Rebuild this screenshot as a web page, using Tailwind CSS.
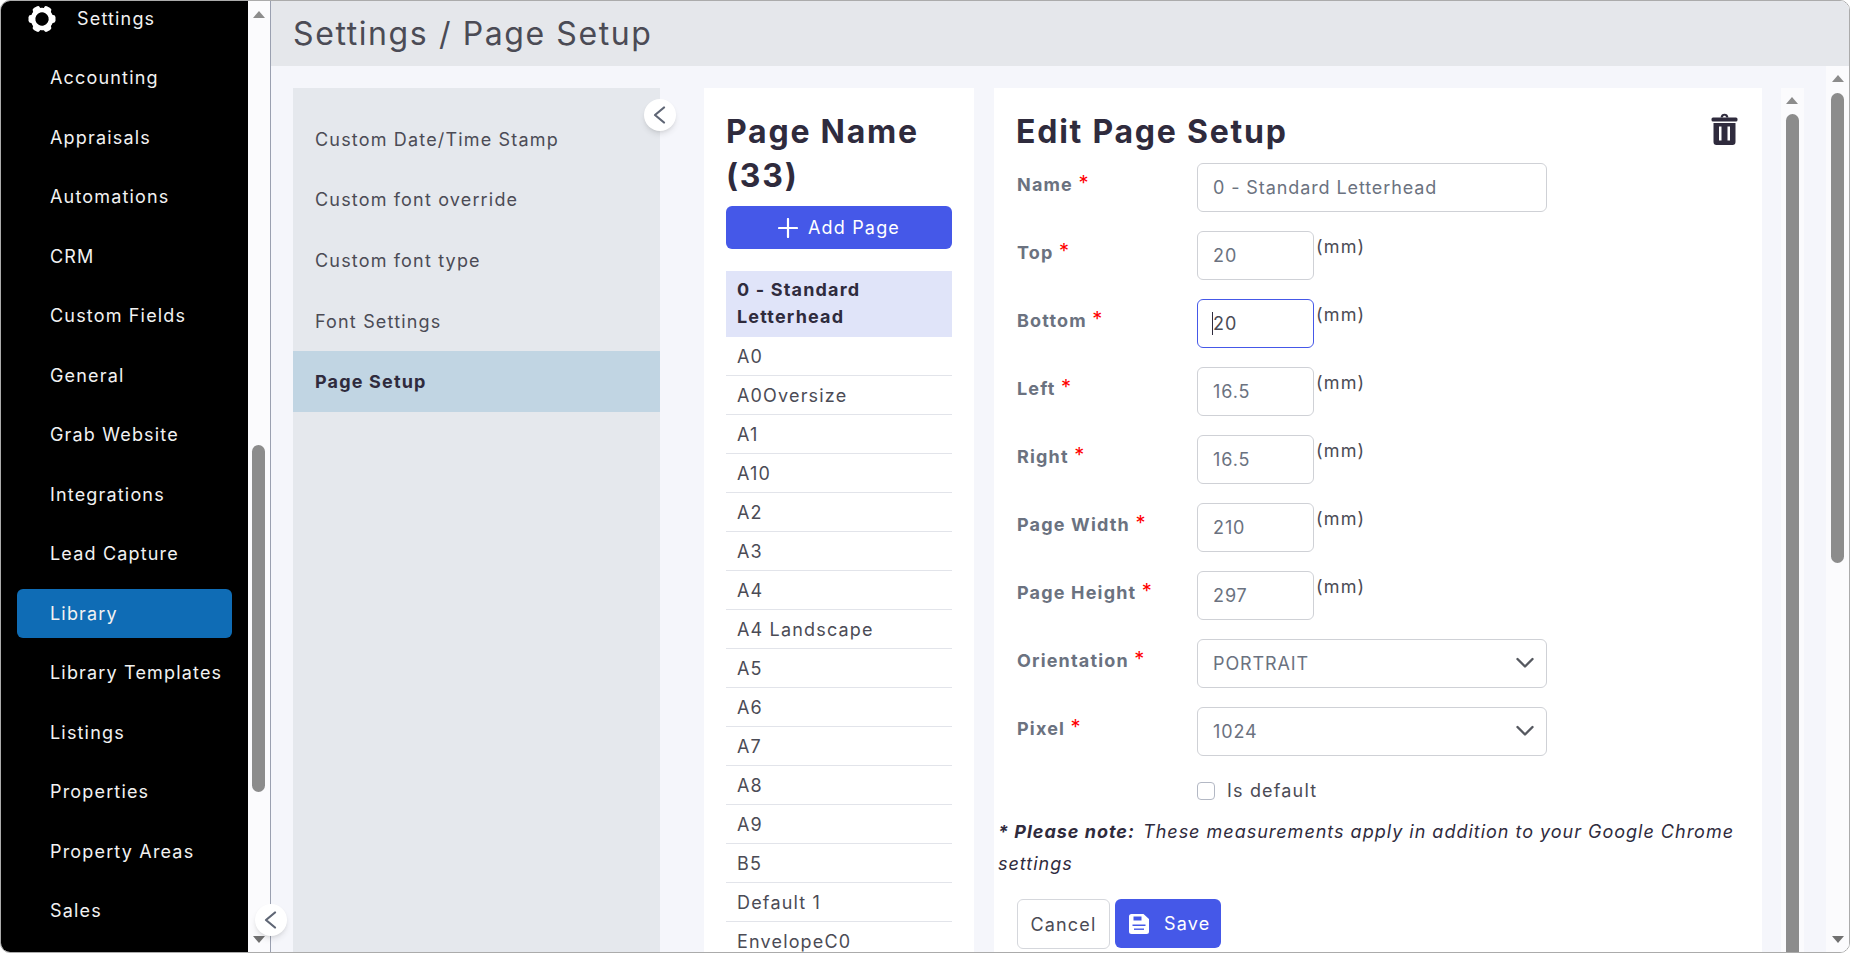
<!DOCTYPE html>
<html lang="en">
<head>
  <meta charset="UTF-8"/>
  <title>Settings / Page Setup</title>
  <script src="https://cdn.jsdelivr.net/npm/@tailwindcss/browser@4"></script>
</head>
<body class="bg-white font-['Inter',sans-serif] tracking-[0.065em] text-[18px]">
<div class="relative flex h-[953px] w-[1850px] overflow-hidden rounded-[10px] border border-[#ababab]">

  <!-- Sidebar -->
  <aside class="flex w-[247px] shrink-0 flex-col bg-black text-[#f2f2f2]">
    <div class="flex h-[35px] shrink-0 items-center pl-[27px]">
      <svg class="h-[28px] w-[28px]" viewBox="0 0 28 28" fill="#fff">
        <g transform="rotate(30 14 14)">
          <circle cx="14" cy="14" r="9" fill="none" stroke="#fff" stroke-width="4.6"/>
          <rect x="10" y="0.500" width="8" height="6" rx="2.4"/>
          <rect x="10" y="21.500" width="8" height="6" rx="2.4"/>
          <rect x="10" y="0.500" width="8" height="6" rx="2.4" transform="rotate(60 14 14)"/>
          <rect x="10" y="0.500" width="8" height="6" rx="2.4" transform="rotate(120 14 14)"/>
          <rect x="10" y="0.500" width="8" height="6" rx="2.4" transform="rotate(240 14 14)"/>
          <rect x="10" y="0.500" width="8" height="6" rx="2.4" transform="rotate(300 14 14)"/>
        </g>
      </svg>
      <span class="ml-[21px]">Settings</span>
    </div>
    <nav class="flex flex-col gap-[10.5px] pt-[17px] pl-[16px] pr-[16px]">
      <a class="flex h-[49px] items-center rounded-md pl-[33px]">Accounting</a>
      <a class="flex h-[49px] items-center rounded-md pl-[33px]">Appraisals</a>
      <a class="flex h-[49px] items-center rounded-md pl-[33px]">Automations</a>
      <a class="flex h-[49px] items-center rounded-md pl-[33px]">CRM</a>
      <a class="flex h-[49px] items-center rounded-md pl-[33px]">Custom Fields</a>
      <a class="flex h-[49px] items-center rounded-md pl-[33px]">General</a>
      <a class="flex h-[49px] items-center rounded-md pl-[33px]">Grab Website</a>
      <a class="flex h-[49px] items-center rounded-md pl-[33px]">Integrations</a>
      <a class="flex h-[49px] items-center rounded-md pl-[33px]">Lead Capture</a>
      <a class="flex h-[49px] items-center rounded-md bg-[#0f6cb5] pl-[33px]">Library</a>
      <a class="flex h-[49px] items-center rounded-md pl-[33px]">Library Templates</a>
      <a class="flex h-[49px] items-center rounded-md pl-[33px]">Listings</a>
      <a class="flex h-[49px] items-center rounded-md pl-[33px]">Properties</a>
      <a class="flex h-[49px] items-center rounded-md pl-[33px]">Property Areas</a>
      <a class="flex h-[49px] items-center rounded-md pl-[33px]">Sales</a>
    </nav>
  </aside>

  <!-- Sidebar scrollbar -->
  <div class="relative w-[23px] shrink-0 border-r border-[#9aa0b0] bg-[#fbfbfd]">
    <div class="absolute top-[10px] left-[5px] h-0 w-0 border-x-[6px] border-b-[7px] border-x-transparent border-b-[#8c8c8c]"></div>
    <div class="absolute top-[444px] left-[4px] h-[347px] w-[13px] rounded-full bg-[#8c8c8c]"></div>
    <div class="absolute bottom-[9px] left-[5px] h-0 w-0 border-x-[6px] border-t-[7px] border-x-transparent border-t-[#707070]"></div>
  </div>

  <!-- Main -->
  <main class="flex min-w-0 flex-1 flex-col bg-[#f5f6fb] text-[#2f2b3d]">
    <header class="flex h-[65px] shrink-0 items-center bg-[#e5e7eb] pl-[22px] text-[32px] text-[#4b4b55] tracking-[0.05em]">
      Settings / Page Setup
    </header>

    <div class="relative flex min-h-0 flex-1 pt-[22px] pl-[22px]">
      <!-- Settings categories -->
      <section class="relative w-[367px] shrink-0 bg-[#e5e8ed] pt-[21px] text-[#4b4b55]">
        <div class="flex h-[60.6px] items-center pl-[22px]">Custom Date/Time Stamp</div>
        <div class="flex h-[60.6px] items-center pl-[22px]">Custom font override</div>
        <div class="flex h-[60.6px] items-center pl-[22px]">Custom font type</div>
        <div class="flex h-[60.6px] items-center pl-[22px]">Font Settings</div>
        <div class="flex h-[60.6px] items-center bg-[#c1d5e3] pl-[22px] font-bold text-[#2f2b3d]">Page Setup</div>
        <button class="absolute top-[11px] -right-[16px] flex h-[32px] w-[32px] items-center justify-center rounded-full bg-white shadow-md">
          <svg class="h-[18px] w-[18px]" viewBox="0 0 18 18" fill="none" stroke="#5f6675" stroke-width="2.2" stroke-linecap="round" stroke-linejoin="round"><path d="M13 1.500 4 9l9 7.500"/></svg>
        </button>
      </section>

      <!-- Page list -->
      <section class="ml-[44px] w-[270px] shrink-0 bg-white px-[22px] pt-[22px]">
        <h2 class="text-[32px] leading-[44px] font-bold tracking-[0.055em]">Page Name (33)</h2>
        <button class="mt-[8px] flex h-[43px] w-full items-center justify-center gap-[10px] rounded-md bg-[#4558e8] text-[#fff]">
          <svg class="h-[20px] w-[20px]" viewBox="0 0 20 20" stroke="#fff" stroke-width="2.2" stroke-linecap="round"><path d="M10 1v18M1 10h18"/></svg>
          Add Page
        </button>
        <ul class="mt-[22px]">
          <li class="bg-[#e0e4f9] px-[11px] pt-[4.5px] pb-[7.5px] leading-[27px] font-bold">0 - Standard Letterhead</li>
          <li class="flex h-[39px] items-center border-b border-[#e2e4ea] pl-[11px] text-[#4b4b55]">A0</li>
          <li class="flex h-[39px] items-center border-b border-[#e2e4ea] pl-[11px] text-[#4b4b55]">A0Oversize</li>
          <li class="flex h-[39px] items-center border-b border-[#e2e4ea] pl-[11px] text-[#4b4b55]">A1</li>
          <li class="flex h-[39px] items-center border-b border-[#e2e4ea] pl-[11px] text-[#4b4b55]">A10</li>
          <li class="flex h-[39px] items-center border-b border-[#e2e4ea] pl-[11px] text-[#4b4b55]">A2</li>
          <li class="flex h-[39px] items-center border-b border-[#e2e4ea] pl-[11px] text-[#4b4b55]">A3</li>
          <li class="flex h-[39px] items-center border-b border-[#e2e4ea] pl-[11px] text-[#4b4b55]">A4</li>
          <li class="flex h-[39px] items-center border-b border-[#e2e4ea] pl-[11px] text-[#4b4b55]">A4 Landscape</li>
          <li class="flex h-[39px] items-center border-b border-[#e2e4ea] pl-[11px] text-[#4b4b55]">A5</li>
          <li class="flex h-[39px] items-center border-b border-[#e2e4ea] pl-[11px] text-[#4b4b55]">A6</li>
          <li class="flex h-[39px] items-center border-b border-[#e2e4ea] pl-[11px] text-[#4b4b55]">A7</li>
          <li class="flex h-[39px] items-center border-b border-[#e2e4ea] pl-[11px] text-[#4b4b55]">A8</li>
          <li class="flex h-[39px] items-center border-b border-[#e2e4ea] pl-[11px] text-[#4b4b55]">A9</li>
          <li class="flex h-[39px] items-center border-b border-[#e2e4ea] pl-[11px] text-[#4b4b55]">B5</li>
          <li class="flex h-[39px] items-center border-b border-[#e2e4ea] pl-[11px] text-[#4b4b55]">Default 1</li>
          <li class="flex h-[39px] items-center border-b border-[#e2e4ea] pl-[11px] text-[#4b4b55]">EnvelopeC0</li>
        </ul>
      </section>

      <!-- Edit form -->
      <section class="relative ml-[20px] w-[768px] shrink-0 bg-white">
        <div class="flex h-[75px] items-start pt-[22px] pl-[22px]">
          <h2 class="text-[32px] leading-[44px] font-bold tracking-[0.055em]">Edit Page Setup</h2>
        </div>
        <svg class="absolute top-[25px] right-[24px] h-[32px] w-[27px]" viewBox="0 0 27 32" fill="#2f2b3d">
          <path d="M9.5 4.5C10 1.8 11.3.8 13.5.8s3.500 1 4 3.700h-2.200c-.4-1.300-.9-1.800-1.800-1.800s-1.400.5-1.800 1.800z"/>
          <rect x="0.500" y="4.500" width="26" height="4" rx="1.500"/>
          <path fill-rule="evenodd" d="M2.500 10h22v19a3 3 0 0 1-3 3h-16a3 3 0 0 1-3-3zM8 13.500v14h2.500v-14zM16.500 13.500v14H19v-14z"/>
        </svg>

        <div class="flex flex-col pl-[23px]">
          <div class="flex h-[68px] items-start">
            <label class="w-[180px] pt-[8px] font-bold text-[#6b7280]">Name <span class="align-[1px] text-[20px] leading-none font-normal text-[#ff0000]">*</span></label>
            <input value="0 - Standard Letterhead" class="h-[49px] w-[350px] rounded-md border border-[#cfd1d6] bg-white pl-[15px] tracking-[0.05em] text-[#6b7280]"/>
          </div>
          <div class="flex h-[68px] items-start">
            <label class="w-[180px] pt-[8px] font-bold text-[#6b7280]">Top <span class="align-[1px] text-[20px] leading-none font-normal text-[#ff0000]">*</span></label>
            <input value="20" class="h-[49px] w-[117px] rounded-md border border-[#cfd1d6] bg-white pl-[15px] tracking-[0.05em] text-[#6b7280]"/>
            <span class="mt-[2px] ml-[2px] text-[#4b4b55]">(mm)</span>
          </div>
          <div class="flex h-[68px] items-start">
            <label class="w-[180px] pt-[8px] font-bold text-[#6b7280]">Bottom <span class="align-[1px] text-[20px] leading-none font-normal text-[#ff0000]">*</span></label>
            <div class="relative">
              <input value="20" class="h-[49px] w-[117px] rounded-md border border-[#4558e8] bg-white pl-[15px] tracking-[0.05em] text-[#4b4b55]"/>
              <div class="absolute top-[13px] left-[15px] h-[23px] w-px bg-[#2f2b3d]"></div>
            </div>
            <span class="mt-[2px] ml-[2px] text-[#4b4b55]">(mm)</span>
          </div>
          <div class="flex h-[68px] items-start">
            <label class="w-[180px] pt-[8px] font-bold text-[#6b7280]">Left <span class="align-[1px] text-[20px] leading-none font-normal text-[#ff0000]">*</span></label>
            <input value="16.5" class="h-[49px] w-[117px] rounded-md border border-[#cfd1d6] bg-white pl-[15px] tracking-[0.05em] text-[#6b7280]"/>
            <span class="mt-[2px] ml-[2px] text-[#4b4b55]">(mm)</span>
          </div>
          <div class="flex h-[68px] items-start">
            <label class="w-[180px] pt-[8px] font-bold text-[#6b7280]">Right <span class="align-[1px] text-[20px] leading-none font-normal text-[#ff0000]">*</span></label>
            <input value="16.5" class="h-[49px] w-[117px] rounded-md border border-[#cfd1d6] bg-white pl-[15px] tracking-[0.05em] text-[#6b7280]"/>
            <span class="mt-[2px] ml-[2px] text-[#4b4b55]">(mm)</span>
          </div>
          <div class="flex h-[68px] items-start">
            <label class="w-[180px] pt-[8px] font-bold text-[#6b7280]">Page Width <span class="align-[1px] text-[20px] leading-none font-normal text-[#ff0000]">*</span></label>
            <input value="210" class="h-[49px] w-[117px] rounded-md border border-[#cfd1d6] bg-white pl-[15px] tracking-[0.05em] text-[#6b7280]"/>
            <span class="mt-[2px] ml-[2px] text-[#4b4b55]">(mm)</span>
          </div>
          <div class="flex h-[68px] items-start">
            <label class="w-[180px] pt-[8px] font-bold text-[#6b7280]">Page Height <span class="align-[1px] text-[20px] leading-none font-normal text-[#ff0000]">*</span></label>
            <input value="297" class="h-[49px] w-[117px] rounded-md border border-[#cfd1d6] bg-white pl-[15px] tracking-[0.05em] text-[#6b7280]"/>
            <span class="mt-[2px] ml-[2px] text-[#4b4b55]">(mm)</span>
          </div>
          <div class="flex h-[68px] items-start">
            <label class="w-[180px] pt-[8px] font-bold text-[#6b7280]">Orientation <span class="align-[1px] text-[20px] leading-none font-normal text-[#ff0000]">*</span></label>
            <div class="relative">
              <select class="h-[49px] w-[350px] appearance-none rounded-md border border-[#cfd1d6] bg-white pl-[15px] tracking-[0.05em] text-[#6b7280]"><option>PORTRAIT</option></select>
              <svg class="absolute top-[18px] right-[13px] h-[12px] w-[18px]" viewBox="0 0 18 12" fill="none" stroke="#55585f" stroke-width="2.400" stroke-linecap="round" stroke-linejoin="round"><path d="M1.500 2 9 9.500 16.500 2"/></svg>
            </div>
          </div>
          <div class="flex h-[68px] items-start">
            <label class="w-[180px] pt-[8px] font-bold text-[#6b7280]">Pixel <span class="align-[1px] text-[20px] leading-none font-normal text-[#ff0000]">*</span></label>
            <div class="relative">
              <select class="h-[49px] w-[350px] appearance-none rounded-md border border-[#cfd1d6] bg-white pl-[15px] tracking-[0.05em] text-[#6b7280]"><option>1024</option></select>
              <svg class="absolute top-[18px] right-[13px] h-[12px] w-[18px]" viewBox="0 0 18 12" fill="none" stroke="#55585f" stroke-width="2.400" stroke-linecap="round" stroke-linejoin="round"><path d="M1.500 2 9 9.500 16.500 2"/></svg>
            </div>
          </div>
          <div class="flex items-center gap-[12px] pl-[180px] leading-[31px] text-[#4b4b55]">
            <span class="h-[18px] w-[18px] rounded-[4px] border border-[#b3b8c4] bg-white"></span>
            Is default
          </div>
        </div>

        <p class="mt-[10px] pl-[4px] leading-[32px] tracking-[0.055em] text-[#2f2b3d] italic"><b class="pr-[2px]">* Please note:</b> These measurements apply in addition to your Google Chrome settings</p>

        <div class="mt-[19px] flex gap-[5px] pl-[23px]">
          <button class="h-[50px] w-[93px] rounded-md border border-[#d5d7dc] bg-white text-[#4b4b55]">Cancel</button>
          <button class="flex h-[49px] w-[106px] items-center gap-[15px] rounded-md bg-[#4558e8] pl-[14px] text-[#fff]">
            <svg class="h-[20px] w-[20px]" viewBox="0 0 20 20" fill="#fff"><path fill-rule="evenodd" d="M2.500 0h12L20 5v12.500a2.500 2.500 0 0 1-2.500 2.500h-15A2.500 2.500 0 0 1 0 17.500v-15A2.500 2.500 0 0 1 2.500 0zM4.500 2.500v4h8v-4zM3.500 10.500v1.500h13v-1.500z"/><rect x="5" y="14.500" width="10" height="1.400" fill="#4558e8"/></svg>
            Save
          </button>
        </div>
      </section>

      <!-- Inner scrollbar -->
      <div class="relative ml-[19px] w-[23px] shrink-0 bg-[#fbfbfd]">
        <div class="absolute top-[9px] left-[5px] h-0 w-0 border-x-[6px] border-b-[7px] border-x-transparent border-b-[#8c8c8c]"></div>
        <div class="absolute top-[26px] bottom-0 left-[5px] w-[13px] rounded-t-full bg-[#8c8c8c]"></div>
      </div>
    </div>
  </main>

  <!-- Page scrollbar -->
  <div class="absolute top-[65px] right-0 bottom-0 w-[23px] bg-[#fbfbfd]">
    <div class="absolute top-[9px] left-[6px] h-0 w-0 border-x-[6px] border-b-[7px] border-x-transparent border-b-[#8c8c8c]"></div>
    <div class="absolute top-[27px] left-[5px] h-[470px] w-[13px] rounded-full bg-[#8c8c8c]"></div>
    <div class="absolute bottom-[9px] left-[6px] h-0 w-0 border-x-[6px] border-t-[7px] border-x-transparent border-t-[#707070]"></div>
  </div>

  <!-- Sidebar collapse -->
  <button class="absolute top-[903px] left-[254px] flex h-[32px] w-[32px] items-center justify-center rounded-full bg-white shadow-md">
    <svg class="h-[18px] w-[18px]" viewBox="0 0 18 18" fill="none" stroke="#5f6675" stroke-width="2.200" stroke-linecap="round" stroke-linejoin="round"><path d="M13 1.500 4 9l9 7.500"/></svg>
  </button>
</div>
</body>
</html>
